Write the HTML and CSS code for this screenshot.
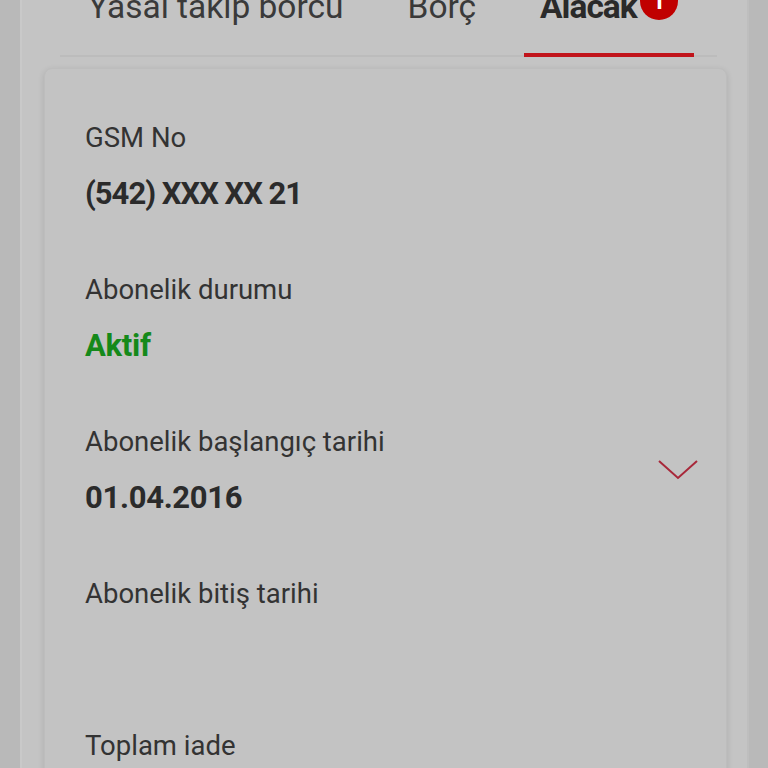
FILE: index.html
```html
<!DOCTYPE html>
<html lang="tr">
<head>
  <meta charset="UTF-8" />
  <meta name="viewport" content="width=device-width, initial-scale=1.0"/>
  <title>Abonelik bilgileri</title>
  <link rel="stylesheet" href="styles.css">
</head>
<body>
  <div class="panel">
    <!-- Tabs -->
    <div class="tabs">
      <div class="tab">Yasal takip borcu</div>
      <div class="tab">Borç</div>
      <div class="tab active">Alacak<span class="badge">1</span></div>
    </div>

    <!-- Subscription card -->
    <div class="card">
      <div class="field">
        <div class="field-text">
          <div class="label">GSM No</div>
          <div class="value tight">(542) XXX XX 21</div>
        </div>
      </div>
      <div class="field">
        <div class="field-text">
          <div class="label">Abonelik durumu</div>
          <div class="value green">Aktif</div>
        </div>
      </div>
      <div class="field">
        <div class="field-text">
          <div class="label">Abonelik başlangıç tarihi</div>
          <div class="value">01.04.2016</div>
        </div>
        <svg class="chevron" width="42" height="22" viewBox="0 0 42 22">
          <path d="M2 2 L21 19 L40 2" fill="none" stroke="#a8283a" stroke-width="2"/>
        </svg>
      </div>
      <div class="field">
        <div class="field-text">
          <div class="label">Abonelik bitiş tarihi</div>
          <div class="value"></div>
        </div>
      </div>
      <div class="field">
        <div class="field-text">
          <div class="label">Toplam iade</div>
          <div class="value"></div>
        </div>
      </div>
    </div>
  </div>
</body>
</html>
```

FILE: styles.css
```css
body {
  margin: 0;
  font-family: Roboto, "Noto Sans", sans-serif;
  background-color: #b9b9b9;
  color: #333;
  overflow: hidden;
}

.panel {
  margin: 0 19px 0 20px;
  min-height: 768px;
  background-color: #c4c4c4;
  border-left: 2px solid #c9c9c9;
  border-right: 2px solid #bebebe;
}

/* Tabs */
.tabs {
  display: flex;
  gap: 32px;
  margin: -18px 30px 0 38px;
  padding-left: 12px;
  border-bottom: 2px solid #bcbcbc;
  white-space: nowrap;
}
.tab {
  position: relative;
  padding: 0 16px 21px;
  font-size: 33.5px;
  line-height: 50px;
  color: #3a3a3a;
  border-bottom: 4px solid transparent;
  margin-bottom: -2px;
}
.tab.active {
  font-weight: bold;
  color: #2a2a2a;
  letter-spacing: -1px;
  border-bottom-color: #c1141b;
}
.badge {
  display: inline-block;
  width: 38px;
  height: 38px;
  margin-left: 3px;
  border-radius: 50%;
  background-color: #c00000;
  color: #fff;
  font-size: 24px;
  line-height: 38px;
  letter-spacing: 0;
  text-align: center;
  vertical-align: 9px;
}

/* Card */
.card {
  margin: 11px 20px 0 22px;
  padding: 51px 27px 0 40px;
  background-color: #c3c3c3;
  border: 1px solid #bdbdbd;
  border-radius: 8px;
  box-shadow: 0 2px 6px rgba(0, 0, 0, 0.12);
  min-height: 700px;
}
.field {
  display: flex;
  align-items: center;
  justify-content: space-between;
  height: 152px;
}
.field-text {
  align-self: flex-start;
}
.label {
  font-size: 27.5px;
  line-height: 36px;
  color: #333;
}
.value {
  margin-top: 18px;
  min-height: 40px;
  font-size: 31px;
  line-height: 40px;
  font-weight: bold;
  color: #2b2b2b;
  letter-spacing: -0.3px;
}
.value.tight {
  letter-spacing: -1px;
}
.green {
  color: #15891a;
}
.chevron {
  margin-top: -60px;
}
```
